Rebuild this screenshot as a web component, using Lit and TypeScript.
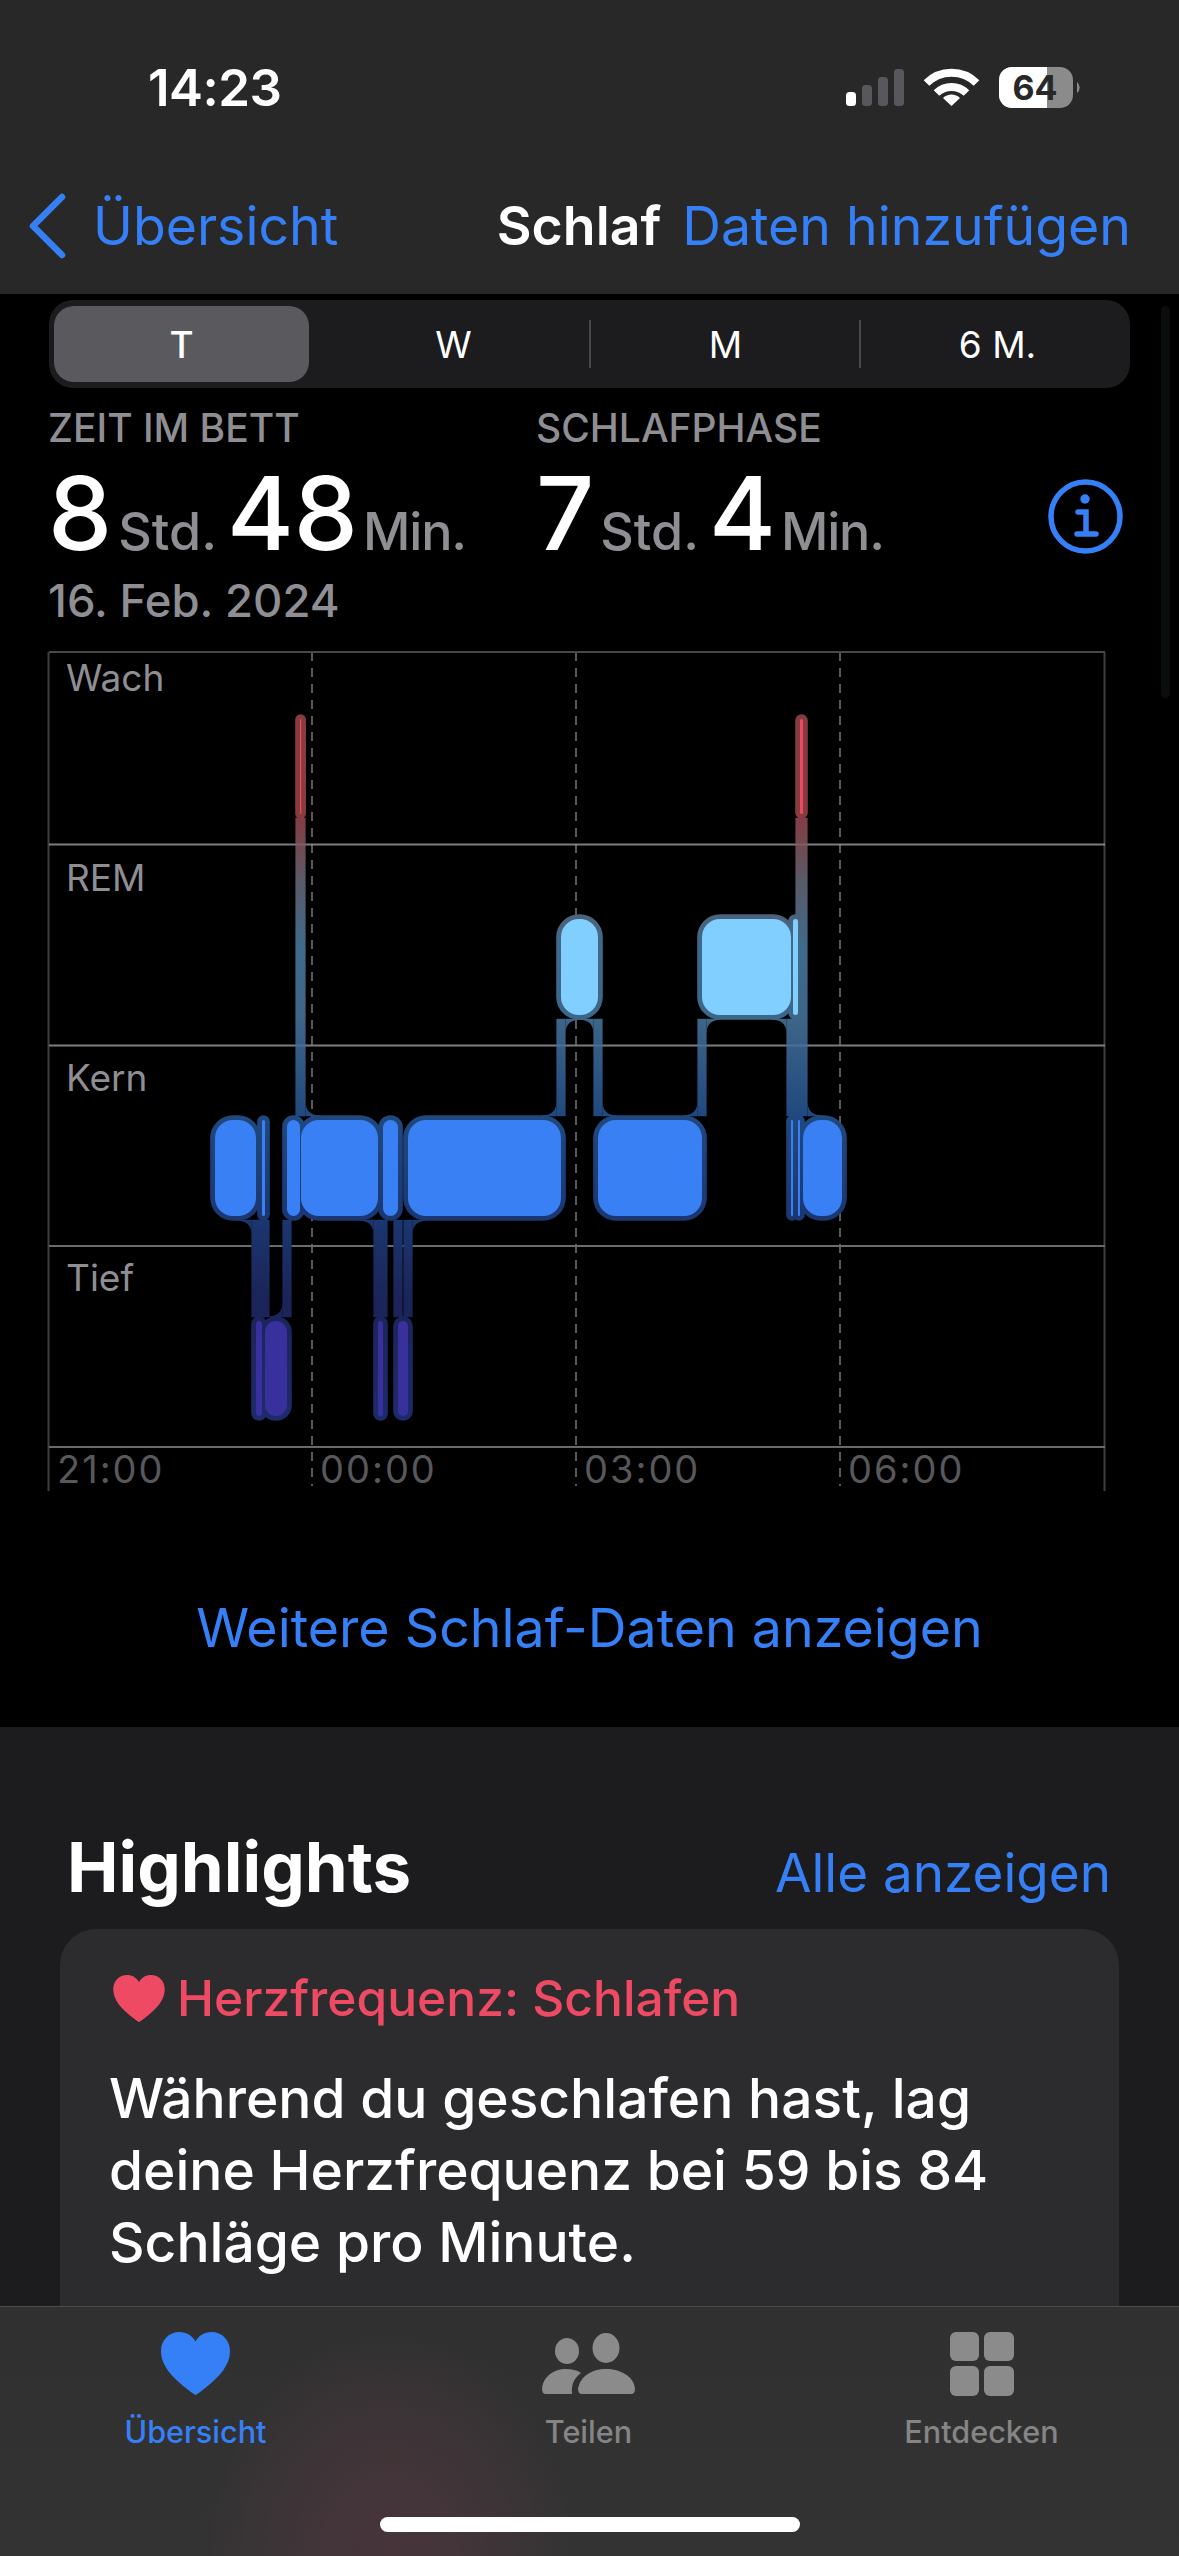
import { LitElement, html, css, svg } from "lit";
import { customElement } from "lit/decorators.js";

type Row = "W" | "R" | "K" | "T";
const ROWS: Record<Row, [number, number]> = {
  W: [719, 814],
  R: [919, 1015],
  K: [1120, 1216],
  T: [1321, 1416],
};
const CORE: Record<Row, string> = { W: "#ee4a5e", R: "#80cfff", K: "#3a80f5", T: "#37309d" };
const SEGS: [number, number, Row][] = [
  [215, 256, "K"], [256, 262, "T"], [262, 265, "K"], [265, 287, "T"], [287, 300, "K"],
  [300, 301.2, "W"], [301, 378, "K"], [378, 383, "T"], [383, 398, "K"], [398, 408, "T"],
  [408, 561, "K"], [561, 598, "R"], [598, 702, "K"], [702, 791, "R"], [791, 793, "K"],
  [793, 798, "R"], [798, 800, "K"], [800, 803, "W"], [803, 842, "K"],
];
const PAD = 4.8;
const CONN = 4.6;
const FR = 14;
const SKIP = new Set(["265:1:T"]);
const ORDER: Row[] = ["W", "R", "K", "T"];

function chartShapes() {
  const halos: unknown[] = [];
  const cores: unknown[] = [];
  const conns: unknown[] = [];
  const trans: number[] = [];
  for (let i = 1; i < SEGS.length; i++) trans.push(SEGS[i][0]);
  for (const [x0, x1, r] of SEGS) {
    const [y0, y1] = ROWS[r];
    const w = x1 - x0;
    const rx = Math.min(18, w / 2);
    halos.push(svg`<rect x=${x0 - PAD} y=${y0 - PAD} width=${w + 2 * PAD} height=${y1 - y0 + 2 * PAD} rx=${rx + PAD} fill="url(#halo)"></rect>`);
    cores.push(svg`<rect x=${x0} y=${y0} width=${w} height=${y1 - y0} rx=${rx} fill=${CORE[r]}></rect>`);
  }
  for (let i = 1; i < SEGS.length; i++) {
    const a = SEGS[i - 1];
    const b = SEGS[i];
    const t = b[0];
    const up = ORDER.indexOf(a[2]) < ORDER.indexOf(b[2]) ? a[2] : b[2];
    const dn = up === a[2] ? b[2] : a[2];
    const yt = ROWS[up][1] + PAD - 1;
    const yb = ROWS[dn][0] - PAD + 1;
    conns.push(svg`<rect x=${t - CONN} y=${yt} width=${2 * CONN} height=${yb - yt} fill="url(#halo)"></rect>`);
    for (const side of [-1, 1]) {
      const ex = t + side * CONN;
      const blocked = trans.some((o) => o !== t && (o - side * CONN - ex) * side >= 0 && (o - side * CONN - ex) * side < FR);
      const inner = trans.some((o) => o !== t && Math.abs(o - ex) < CONN);
      for (const [row, ye, d] of [[up, ROWS[up][1] + PAD, 1], [dn, ROWS[dn][0] - PAD, -1]] as [Row, number, number][]) {
        if (SKIP.has(`${t}:${side}:${row}`)) continue;
        const covered = SEGS.some(([x0, x1, r]) => r === row && ex + side * FR >= x0 - PAD + 8 && ex + side * FR <= x1 + PAD - 8);
        if (inner || !covered) continue;
        if (blocked && !(t === 287 && row === "T")) continue;
        conns.push(svg`<path d="M${ex} ${ye - d} L${ex + side * FR} ${ye - d} L${ex + side * FR} ${ye} Q${ex} ${ye} ${ex} ${ye + d * FR} Z" fill="url(#halo)"></path>`);
      }
    }
  }
  return { halos, cores, conns };
}

const HEART = "M34.5 63 C33 62 30.5 60.5 28 58.5 C10 45 0 33 0 19 C0 8 8 0 18.5 0 C25.5 0 31 3.5 34.5 9.5 C38 3.5 43.5 0 50.5 0 C61 0 69 8 69 19 C69 33 59 45 41 58.5 C38.5 60.5 36 62 34.5 63 Z";

@customElement("app-root")
export class AppRoot extends LitElement {
  static styles = css`
    :host {
      display: block;
      position: relative;
      width: 1179px;
      height: 2556px;
      overflow: hidden;
      background: #000;
      font-family: Inter, "Liberation Sans", sans-serif;
      color: #fff;
    }
    .header { height: 294px; background: #282828; box-sizing: border-box; }
    .status { display: flex; height: 113px; padding-left: 148px; padding-top: 63px; box-sizing: border-box; position: relative; }
    .time { font-size: 51px; line-height: 50px; font-weight: 600; letter-spacing: -0.5px; }
    .status-icons { position: absolute; left: 840px; top: 60px; }
    .nav { display: flex; align-items: center; height: 60px; margin-top: 83px; padding: 0 48px 0 29px; font-size: 53.6px; line-height: 60px; }
    .back { display: flex; align-items: center; color: #3680f7; gap: 25px; }
    .chev { flex: none; }
    .title { margin-left: auto; font-weight: 600; color: #fff; }
    .add { margin-left: 21px; color: #3680f7; }
    .seg { display: grid; grid-template-columns: repeat(4, 255px); gap: 17px; height: 88px; box-sizing: border-box; margin: 6px 49px 0; padding: 6px 5px; background: #1c1c1e; border-radius: 24px; }
    .seg div { display: flex; align-items: center; justify-content: center; font-size: 37px; font-weight: 400; position: relative; }
    .seg .on { background: #5a5a5e; border-radius: 20px; font-weight: 500; }
    .seg .sep::before { content: ""; position: absolute; left: -9px; top: 14px; bottom: 14px; width: 2px; background: #48484a; }
    .seg .sep:last-child::before { left: -11px; }
    .scroll { position: absolute; left: 1161px; top: 306px; width: 9px; height: 392px; border-radius: 5px; background: #0b0c0d; }
    .stats { display: flex; margin-top: 18px; padding: 0 56px 0 48px; }
    .stat { width: 488px; }
    .label { font-size: 39px; line-height: 44px; font-weight: 500; color: #8e8e93; }
    .value { margin-top: 8px; font-size: 102px; line-height: 110px; font-weight: 500; white-space: nowrap; }
    .unit { font-size: 52px; line-height: 1; color: #8e8e93; margin: 0 10px 0 6px; }
    .unit.min { letter-spacing: -1.2px; margin-left: 5px; }
    .info { margin: 73px 0 0 auto; flex: none; }
    .date { margin: 9px 0 0 48px; font-size: 45.5px; line-height: 48px; font-weight: 500; color: #8e8e93; }
    .chart { display: block; margin-top: 15px; }
    .chart text { font-family: Inter, "Liberation Sans", sans-serif; font-size: 37px; }
    .chart .t text { font-size: 38px; letter-spacing: 2px; }
    .more { margin-top: 96px; padding-bottom: 67px; text-align: center; font-size: 53.7px; line-height: 64px; color: #3680f7; }
    .lower { background: #1c1c1e; padding-top: 100px; height: 829px; box-sizing: border-box; }
    .hl { display: flex; justify-content: space-between; align-items: baseline; padding: 0 68px 0 67px; }
    .hl h2 { margin: 0; font-size: 69px; line-height: 80px; font-weight: 700; }
    .hl span { font-size: 53px; color: #3680f7; }
    .card { margin: 22px 60px 0; padding: 41px 49px 100px; background: #2c2c2e; border-radius: 36px; }
    .ctitle { display: flex; align-items: center; gap: 12px; padding-left: 4px; font-size: 49.7px; line-height: 56px; font-weight: 500; color: #ef4a63; }
    .body { margin: 36px 0 0; font-size: 55.1px; line-height: 72px; font-weight: 500; }
    .tabs { position: absolute; left: 0; right: 0; bottom: 0; height: 250px; box-sizing: border-box; border-top: 1px solid #4c4c4c; display: grid; grid-template-columns: repeat(3, 393px); padding: 25px 0 0 0;
      background: radial-gradient(ellipse 190px 230px at 390px 250px, #46343a 0%, #433539 35%, rgba(51,51,51,0) 100%), linear-gradient(#303030, #333333); }
    .tab { display: flex; flex-direction: column; align-items: center; font-size: 30.6px; line-height: 36px; font-weight: 500; color: #858585; transform: translateX(-1px); }
    .tab svg { margin-bottom: 18px; display: block; }
    .tab.active { color: #3680f7; }
    .home { position: absolute; left: 380px; bottom: 24px; width: 420px; height: 15px; border-radius: 8px; background: #fff; }
  `;

  render() {
    const { halos, cores, conns } = chartShapes();
    const hlines = [652, 844.5, 1045.5, 1246, 1447];
    const hcol = ["#48484a", "#8e8e8e", "#6a6a6a", "#6a6a6a", "#6a6a6a"];
    return html`
      <div class="header">
        <div class="status">
          <span class="time">14:23</span>
          <svg class="status-icons" width="250" height="60" viewBox="840 60 250 60">
            <rect x="846" y="92" width="10" height="14" rx="3.5" fill="#fff"></rect>
            <rect x="862" y="85" width="10" height="21" rx="3.5" fill="#58585c"></rect>
            <rect x="878" y="77" width="10" height="29" rx="3.5" fill="#58585c"></rect>
            <rect x="894" y="69" width="10" height="37" rx="3.5" fill="#58585c"></rect>
            <g fill="none" stroke="#fff" stroke-width="8">
              <path d="M926.5 83 A35.5 35.5 0 0 1 976.5 83"></path>
              <path d="M936.5 93 A21.5 21.5 0 0 1 966.5 93"></path>
            </g>
            <path d="M943 98 A12 12 0 0 1 960 98 L951.5 106 Z" fill="#fff"></path>
            <rect x="999" y="67" width="74" height="41" rx="13" fill="#8b8b8b"></rect>
            <path d="M1012 67 H1047 V108 H1012 A13 13 0 0 1 999 95 V80 A13 13 0 0 1 1012 67 Z" fill="#fff"></path>
            <path d="M1077 82 A7 7 0 0 1 1077 93 Z" fill="#8b8b8b"></path>
            <text x="1035" y="100" text-anchor="middle" font-size="34" font-weight="700" fill="#282828" font-family="Inter, sans-serif">64</text>
          </svg>
        </div>
        <div class="nav">
          <div class="back">
            <svg class="chev" width="39" height="66" viewBox="0 0 39 66"><path d="M33 4 L4 33 L33 62" fill="none" stroke="#3680f7" stroke-width="6.5" stroke-linecap="round" stroke-linejoin="round"></path></svg>
            <span>Übersicht</span>
          </div>
          <span class="title">Schlaf</span>
          <span class="add">Daten hinzufügen</span>
        </div>
      </div>
      <div class="seg">
        <div class="on">T</div><div>W</div><div class="sep">M</div><div class="sep">6 M.</div>
      </div>
      <div class="scroll"></div>
      <div class="stats">
        <div class="stat">
          <div class="label">ZEIT IM BETT</div>
          <div class="value">8<span class="unit">Std.</span>48<span class="unit min">Min.</span></div>
        </div>
        <div class="stat">
          <div class="label">SCHLAFPHASE</div>
          <div class="value">7<span class="unit">Std.</span>4<span class="unit min">Min.</span></div>
        </div>
        <svg class="info" width="75" height="75" viewBox="1049 479 75 75" fill="none" stroke="#3680f7" stroke-width="5.5" stroke-linecap="round">
          <circle cx="1086.5" cy="516.5" r="34.5"></circle>
          <circle cx="1086" cy="499" r="4.7" fill="#3680f7" stroke="none"></circle>
          <path d="M1079 512 H1087 V534 M1078 534 H1097"></path>
        </svg>
      </div>
      <div class="date">16. Feb. 2024</div>
      <svg class="chart" width="1179" height="860" viewBox="0 640 1179 860">
        <defs>
          <linearGradient id="halo" gradientUnits="userSpaceOnUse" x1="0" y1="714" x2="0" y2="1420">
            <stop offset="0.1416" stop-color="#863b40"></stop>
            <stop offset="0.235" stop-color="#5a5a68"></stop>
            <stop offset="0.334" stop-color="#3e6a8c"></stop>
            <stop offset="0.433" stop-color="#3d6588"></stop>
            <stop offset="0.568" stop-color="#20497f"></stop>
            <stop offset="0.717" stop-color="#1b3670"></stop>
            <stop offset="0.83" stop-color="#1b2458"></stop>
            <stop offset="1" stop-color="#1e2b6b"></stop>
          </linearGradient>
        </defs>
        <path d="M48.5 652 V1491 M1104.5 652 V1491" stroke="#3f3f41" stroke-width="2" fill="none"></path>
        ${[312, 576, 840].map((x) => svg`<path d="M${x} 652 V1486" stroke="#5a5a5c" stroke-width="2" stroke-dasharray="9 7" fill="none"></path>`)}
        ${hlines.map((y, i) => svg`<rect x="49" y=${y - 1} width="1056" height="2" fill=${hcol[i]} opacity=${i === 1 ? 0.75 : 1}></rect>`)}
        ${halos}${conns}
        ${hlines.slice(1, 3).map((y) => svg`<rect x="49" y=${y - 1} width="1056" height="2" fill="#fff" opacity="0.12"></rect>`)}
        ${cores}
        <g fill="#8e8e93">
          <text x="66" y="691">Wach</text>
          <text x="66" y="891">REM</text>
          <text x="66" y="1091">Kern</text>
          <text x="66" y="1291">Tief</text>
        </g>
        <g class="t" fill="#58585a">
          <text x="57" y="1483">21:00</text>
          <text x="320" y="1483">00:00</text>
          <text x="584" y="1483">03:00</text>
          <text x="848" y="1483">06:00</text>
        </g>
      </svg>
      <div class="more">Weitere Schlaf-Daten anzeigen</div>
      <div class="lower">
        <div class="hl"><h2>Highlights</h2><span>Alle anzeigen</span></div>
        <div class="card">
          <div class="ctitle">
            <svg width="52" height="47" viewBox="0 0 69 63"><path d=${HEART} fill="#ef4a63"></path></svg>
            <span>Herzfrequenz: Schlafen</span>
          </div>
          <p class="body">Während du geschlafen hast, lag<br />deine Herzfrequenz bei 59 bis 84<br />Schläge pro Minute.</p>
        </div>
      </div>
      <div class="tabs">
        <div class="tab active">
          <svg width="69" height="64" viewBox="0 0 69 64"><path d=${HEART} fill="#3680f7"></path></svg>
          <span>Übersicht</span>
        </div>
        <div class="tab">
          <svg width="94" height="64" viewBox="542 2331 94 64" fill="#8b8b8b">
            <ellipse cx="567" cy="2350" rx="12" ry="13"></ellipse>
            <ellipse cx="606" cy="2347" rx="13.5" ry="15"></ellipse>
            <path d="M582 2393 Q578 2393 578 2388 C580 2375 592 2368 606 2368 C620 2368 634 2375 635 2388 Q635 2393 631 2393 Z"></path>
            <path d="M546 2393 Q542 2393 542 2388 C543 2376 553 2368 566 2368 C572 2368 577 2369 581 2372 C574 2377 571 2384 572 2393 Z"></path>
          </svg>
          <span>Teilen</span>
        </div>
        <div class="tab">
          <svg width="64" height="64" viewBox="949 2332 64 64" fill="#8b8b8b">
            <rect x="949" y="2332" width="29" height="29" rx="6"></rect>
            <rect x="983" y="2332" width="30" height="29" rx="6"></rect>
            <rect x="949" y="2366" width="29" height="30" rx="6"></rect>
            <rect x="983" y="2366" width="30" height="30" rx="6"></rect>
          </svg>
          <span>Entdecken</span>
        </div>
        <div class="home"></div>
      </div>
    `;
  }
}
